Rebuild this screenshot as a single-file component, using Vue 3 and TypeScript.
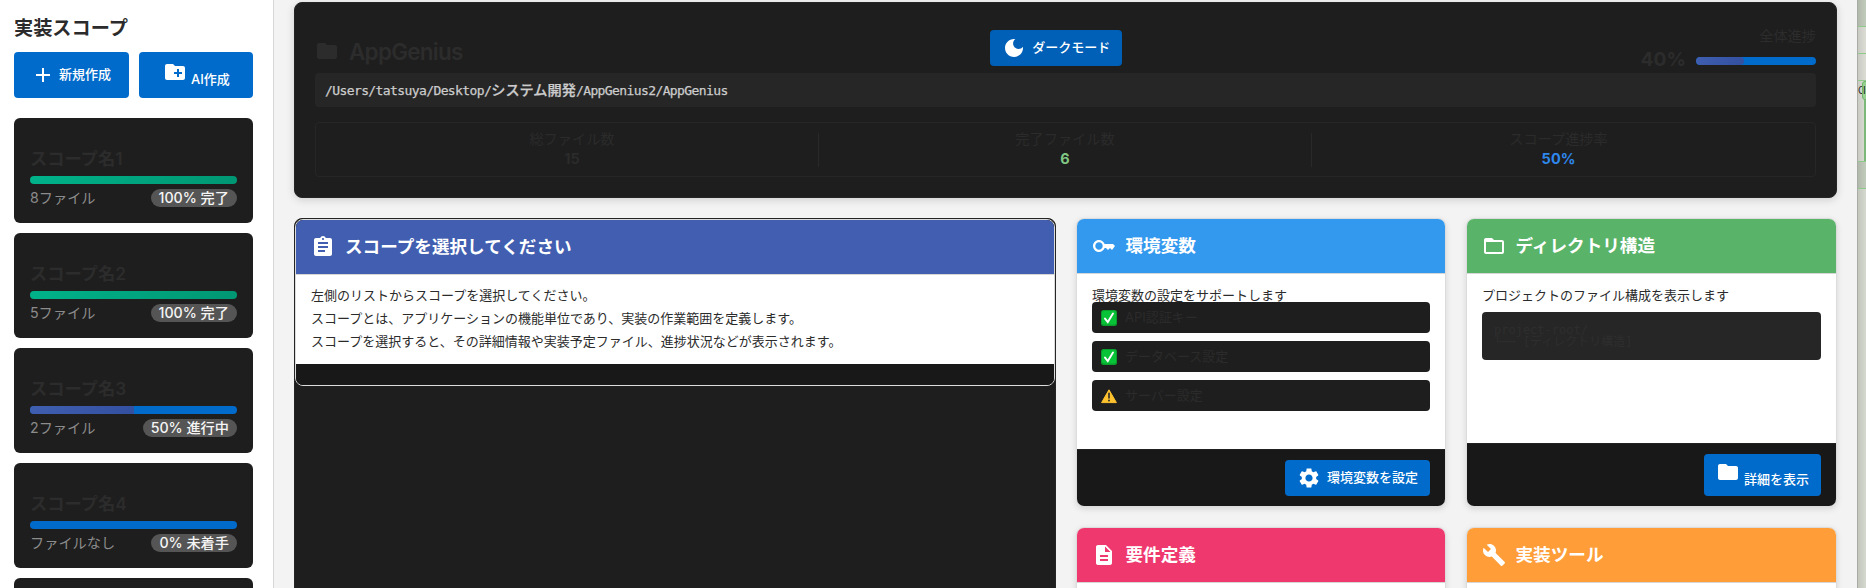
<script setup lang="ts">
interface Scope {
  name: string
  files: string
  status: string
  percent: number
}

const scopes: Scope[] = [
  { name: 'スコープ名1', files: '8ファイル', status: '100% 完了', percent: 100 },
  { name: 'スコープ名2', files: '5ファイル', status: '100% 完了', percent: 100 },
  { name: 'スコープ名3', files: '2ファイル', status: '50% 進行中', percent: 50 },
  { name: 'スコープ名4', files: 'ファイルなし', status: '0% 未着手', percent: 0 },
]

const stats = [
  { label: '総ファイル数', value: '15', tone: 'plain' },
  { label: '完了ファイル数', value: '6', tone: 'green' },
  { label: 'スコープ進捗率', value: '50%', tone: 'blue' },
]

const envItems = [
  { label: 'API認証キー', ok: true },
  { label: 'データベース設定', ok: true },
  { label: 'サーバー設定', ok: false },
]

const icons = {
  add: 'M19 13h-6v6h-2v-6H5v-2h6V5h2v6h6v2z',
  newFolder:
    'M20 6h-8l-2-2H4c-1.11 0-1.99.89-1.99 2L2 18c0 1.11.89 2 2 2h16c1.11 0 2-.89 2-2V8c0-1.11-.89-2-2-2zm-1 8h-3v3h-2v-3h-3v-2h3V9h2v3h3v2z',
  folder: 'M10 4H4c-1.1 0-1.99.9-1.99 2L2 18c0 1.1.9 2 2 2h16c1.1 0 2-.9 2-2V8c0-1.1-.9-2-2-2h-8l-2-2z',
  folderOutline:
    'M20 6h-8l-2-2H4c-1.1 0-1.99.9-1.99 2L2 18c0 1.1.9 2 2 2h16c1.1 0 2-.9 2-2V8c0-1.1-.9-2-2-2zm0 12H4V8h16v10z',
  moon: 'M12 3c-4.97 0-9 4.03-9 9s4.03 9 9 9 9-4.03 9-9c0-.46-.04-.92-.1-1.36-.98 1.37-2.58 2.26-4.4 2.26-2.98 0-5.4-2.42-5.4-5.4 0-1.81.89-3.42 2.26-4.4-.44-.06-.9-.1-1.36-.1z',
  clipboard:
    'M19 3h-4.18C14.4 1.84 13.3 1 12 1c-1.3 0-2.4.84-2.82 2H5c-1.1 0-2 .9-2 2v14c0 1.1.9 2 2 2h14c1.1 0 2-.9 2-2V5c0-1.1-.9-2-2-2zm-7 0c.55 0 1 .45 1 1s-.45 1-1 1-1-.45-1-1 .45-1 1-1zm2 14H7v-2h7v2zm3-4H7v-2h10v2zm0-4H7V7h10v2z',
  key: 'M12.65 10C11.83 7.67 9.61 6 7 6c-3.31 0-6 2.69-6 6s2.69 6 6 6c2.61 0 4.83-1.67 5.65-4l1.35 0 2 2 2-2 2 2 3-4-2-2H12.65zM7 15.7c-2.04 0-3.7-1.66-3.7-3.7S4.96 8.3 7 8.3s3.7 1.66 3.7 3.7-1.66 3.7-3.7 3.7z',
  document:
    'M14 2H6c-1.1 0-1.99.9-1.99 2L4 20c0 1.1.89 2 1.99 2H18c1.1 0 2-.9 2-2V8l-6-6zm2 16H8v-2h8v2zm0-4H8v-2h8v2zm-3-5V3.5L18.5 9H13z',
  wrench:
    'M22.7 19l-9.1-9.1c.9-2.3.4-5-1.5-6.9-2-2-5-2.4-7.4-1.3L9 6 6 9 1.6 4.7C.4 7.1.9 10.1 2.9 12.1c1.9 1.9 4.6 2.4 6.9 1.5l9.1 9.1c.4.4 1 .4 1.4 0l2.3-2.3c.5-.4.5-1.1.1-1.4z',
  gear: 'M19.14 12.94c.04-.3.06-.61.06-.94 0-.32-.02-.64-.07-.94l2.03-1.58c.18-.14.23-.41.12-.61l-1.92-3.32c-.12-.22-.37-.29-.59-.22l-2.39.96c-.5-.38-1.03-.7-1.62-.94l-.36-2.54c-.04-.24-.24-.41-.48-.41h-3.84c-.24 0-.43.17-.47.41l-.36 2.54c-.59.24-1.13.57-1.62.94l-2.39-.96c-.22-.08-.47 0-.59.22L2.74 8.87c-.12.21-.08.47.12.61l2.03 1.58c-.05.3-.09.63-.09.94s.02.64.07.94l-2.03 1.58c-.18.14-.23.41-.12.61l1.92 3.32c.12.22.37.29.59.22l2.39-.96c.5.38 1.03.7 1.62.94l.36 2.54c.05.24.24.41.48.41h3.84c.24 0 .44-.17.47-.41l.36-2.54c.59-.24 1.13-.56 1.62-.94l2.39.96c.22.08.47 0 .59-.22l1.92-3.32c.12-.22.07-.47-.12-.61l-2.01-1.58zM12 15.6c-1.98 0-3.6-1.62-3.6-3.6s1.62-3.6 3.6-3.6 3.6 1.62 3.6 3.6-1.62 3.6-3.6 3.6z',
}
</script>

<template>
  <div class="app">
    <aside class="sidebar">
      <h2 class="side-title">実装スコープ</h2>
      <div class="side-actions">
        <button class="btn new">
          <svg class="icon" viewBox="0 0 24 24"><path :d="icons.add" /></svg><span>新規作成</span>
        </button>
        <button class="btn ai">
          <svg class="icon" viewBox="0 0 24 24"><path :d="icons.newFolder" /></svg><span class="low">AI作成</span>
        </button>
      </div>
      <div v-for="s in scopes" :key="s.name" class="scope">
        <div class="scope-name">{{ s.name }}</div>
        <div class="bar">
          <div class="fill" :class="{ done: s.percent === 100 }" :style="{ width: s.percent + '%' }"></div>
        </div>
        <div class="scope-foot">
          <span class="files">{{ s.files }}</span>
          <span class="pill">{{ s.status }}</span>
        </div>
      </div>
      <div class="scope"></div>
    </aside>

    <main class="main">
      <section class="project">
        <div class="project-top">
          <div class="project-name">
            <svg class="icon" viewBox="0 0 24 24"><path :d="icons.folder" /></svg>
            <span>AppGenius</span>
          </div>
          <button class="btn theme">
            <svg class="icon" viewBox="0 0 24 24"><path :d="icons.moon" /></svg><span>ダークモード</span>
          </button>
          <div class="overall">
            <div class="overall-label">全体進捗</div>
            <div class="overall-row">
              <span class="overall-value">40%</span>
              <div class="bar overall-bar"><div class="fill round" :style="{ width: '40%' }"></div></div>
            </div>
          </div>
        </div>
        <div class="path">/Users/tatsuya/Desktop/<span class="jp">システム開発</span>/AppGenius2/AppGenius</div>
        <div class="stats">
          <div v-for="st in stats" :key="st.label" class="stat">
            <div class="stat-label">{{ st.label }}</div>
            <div class="stat-value" :class="st.tone">{{ st.value }}</div>
          </div>
        </div>
      </section>

      <div class="board">
        <section class="detail">
          <div class="card detail-card">
            <header class="card-head indigo">
              <svg class="icon" viewBox="0 0 24 24"><path :d="icons.clipboard" /></svg>
              <span>スコープを選択してください</span>
            </header>
            <div class="detail-body">
              <p>左側のリストからスコープを選択してください。</p>
              <p>スコープとは、アプリケーションの機能単位であり、実装の作業範囲を定義します。</p>
              <p>スコープを選択すると、その詳細情報や実装予定ファイル、進捗状況などが表示されます。</p>
            </div>
            <footer class="detail-foot"></footer>
          </div>
        </section>

        <section class="tools">
          <div class="card">
            <header class="card-head sky">
              <svg class="icon" viewBox="0 0 24 24"><path :d="icons.key" /></svg><span>環境変数</span>
            </header>
            <div class="card-body">
              <p class="lead">環境変数の設定をサポートします</p>
              <div v-for="e in envItems" :key="e.label" class="env">
                <svg v-if="e.ok" class="mark" viewBox="0 0 16 16">
                  <rect width="16" height="16" rx="2.5" fill="#0a9f2c" />
                  <rect x="1" y="1" width="14" height="13.5" rx="2" fill="#08c238" />
                  <path d="M4 8.6 6.8 12 12 3.6" fill="none" stroke="#fff" stroke-width="1.9" stroke-linecap="round" />
                </svg>
                <svg v-else class="mark" viewBox="0 0 16 16">
                  <path d="M8 1.8 15.4 14.6H.6z" fill="#fec22f" stroke="#fec22f" stroke-width="1" stroke-linejoin="round" />
                  <path d="M8 5.4v4.4" stroke="#33302a" stroke-width="1.7" stroke-linecap="round" />
                  <circle cx="8" cy="12.5" r="1" fill="#33302a" />
                </svg>
                <span>{{ e.label }}</span>
              </div>
            </div>
            <footer class="card-foot">
              <button class="btn">
                <svg class="icon" viewBox="0 0 24 24"><path :d="icons.gear" /></svg><span>環境変数を設定</span>
              </button>
            </footer>
          </div>

          <div class="card">
            <header class="card-head green">
              <svg class="icon" viewBox="0 0 24 24"><path :d="icons.folderOutline" /></svg><span>ディレクトリ構造</span>
            </header>
            <div class="card-body">
              <p class="lead">プロジェクトのファイル構成を表示します</p>
              <pre class="tree">project-root/
└── [ディレクトリ構造]</pre>
            </div>
            <footer class="card-foot">
              <button class="btn show">
                <svg class="icon" viewBox="0 0 24 24"><path :d="icons.folder" /></svg><span class="low">詳細を表示</span>
              </button>
            </footer>
          </div>

          <div class="card">
            <header class="card-head pink">
              <svg class="icon" viewBox="0 0 24 24"><path :d="icons.document" /></svg><span>要件定義</span>
            </header>
          </div>
          <div class="card">
            <header class="card-head orange">
              <svg class="icon" viewBox="0 0 24 24"><path :d="icons.wrench" /></svg><span>実装ツール</span>
            </header>
          </div>
        </section>
      </div>
    </main>

    <div class="edge">
      <div class="row shade"></div>
      <div class="row"></div>
      <div class="row"></div>
      <div class="row tall">
        <div class="chip-line"><span>C</span><span class="chip">I</span></div>
        <div class="stem"></div>
      </div>
      <div class="row shade"></div>
    </div>
  </div>
</template>

<style>
body {
  margin: 0;
  overflow: hidden;
}
</style>

<style scoped>
.app {
  display: flex;
  width: 1866px;
  height: 588px;
  overflow: hidden;
  background: #f3f3f3;
  color: #2b2b2b;
  font-family: Inter, 'Noto Sans CJK JP', sans-serif;
  font-size: 13px;
}
.app * {
  box-sizing: border-box;
}
p,
h2,
pre {
  margin: 0;
}
.icon {
  width: 24px;
  height: 24px;
  flex: none;
  fill: currentColor;
}

.sidebar {
  width: 274px;
  flex: none;
  padding: 14px 20px 0 14px;
  background: #fff;
  border-right: 1px solid #d6d6d6;
}
.side-title {
  height: 38px;
  font-size: 19.2px;
  line-height: 28px;
  font-weight: 600;
}
.side-actions {
  display: grid;
  grid-template-columns: 115px 114px;
  gap: 10px;
  margin-bottom: 20px;
}
.btn {
  display: flex;
  align-items: center;
  height: 36px;
  padding: 0 12px;
  gap: 6px;
  border: 0;
  border-radius: 4px;
  background: #006bcb;
  color: #fff;
  font: 500 13px/20px Inter, 'Noto Sans CJK JP', sans-serif;
  white-space: nowrap;
}
.btn span {
  margin-top: -3px;
}
.new,
.ai {
  height: 46px;
  padding: 0 0 0 17px;
  gap: 4px;
}
.ai {
  padding: 0 0 7px 24px;
}
.btn .low {
  margin-top: 14px;
}
.ai .low {
  margin-top: 15px;
}
.scope {
  height: 105px;
  margin-bottom: 10px;
  padding: 28px 16px 0;
  border-radius: 6px;
  background: #1e1e1e;
}
.scope-name {
  height: 30px;
  font-size: 17.3px;
  line-height: 26px;
  font-weight: 600;
  color: #2c2c2c;
}
.bar {
  height: 8px;
  border-radius: 4px;
  background: #006bcb;
  overflow: hidden;
}
.fill {
  height: 100%;
  background: linear-gradient(135deg, #415fb0, #324fa0);
}
.fill.done {
  background: linear-gradient(135deg, #00b38a, #009673);
}
.fill.round {
  border-radius: 4px;
}
.scope-foot {
  display: flex;
  justify-content: space-between;
  margin-top: 5px;
  font-size: 14.2px;
  line-height: 18px;
}
.files {
  color: #8c8c8c;
}
.pill {
  height: 18px;
  padding: 0 8px;
  border-radius: 9px;
  background: #555;
  color: #f5f5f5;
  font-weight: 500;
  line-height: 17px;
}

.main {
  width: 1583px;
  flex: none;
  padding: 2px 20px 0;
}
.project {
  height: 196px;
  margin-bottom: 20px;
  padding: 27px 20px 0;
  border: 1px solid #252525;
  border-radius: 8px;
  background: #1e1e1e;
  box-shadow: 0 2px 8px rgba(0, 0, 0, 0.15);
}
.project-top {
  display: flex;
  justify-content: space-between;
  height: 43px;
}
.project-name {
  display: flex;
  align-items: center;
  gap: 10px;
  width: 157px;
  height: 24px;
  margin-top: 9px;
  font-size: 22.5px;
  letter-spacing: -0.75px;
  font-weight: 600;
  color: #2c2c2c;
}
.theme {
  background: #0060b7;
}
.overall {
  color: #2c2c2c;
}
.overall-label {
  height: 20px;
  font-size: 14.2px;
  line-height: 11px;
  text-align: right;
}
.overall-row {
  display: flex;
  align-items: center;
  gap: 10px;
}
.overall-value {
  font-size: 19.2px;
  line-height: 18px;
  font-weight: 700;
}
.overall-bar {
  width: 120px;
  margin-top: 4px;
}
.path {
  height: 34px;
  padding: 0 10px;
  border-radius: 4px;
  background: #262626;
  color: #ccc;
  font: 13px/32px 'DejaVu Sans Mono', 'Noto Sans CJK JP', monospace;
  letter-spacing: -0.6px;
  -webkit-text-stroke: 0.25px #ccc;
}
.jp {
  font-family: 'Noto Sans CJK JP', sans-serif;
  font-size: 14.2px;
  font-weight: 500;
  letter-spacing: 0;
}
.stats {
  display: grid;
  grid-template-columns: repeat(3, 1fr);
  height: 55px;
  margin-top: 15px;
  padding: 10px;
  border: 1px solid #262626;
  border-radius: 4px;
}
.stat {
  text-align: center;
}
.stat:not(:last-child) {
  border-right: 1px solid #292929;
}
.stat-label {
  height: 18px;
  font-size: 14.2px;
  line-height: 12px;
}
.stat-value {
  font-size: 14.5px;
  line-height: 16px;
  font-weight: 700;
}
.green.stat-value {
  color: #81c784;
}
.blue.stat-value {
  color: #2f88ee;
}

.board {
  display: flex;
  gap: 20px;
}
.detail {
  width: 762px;
  height: 400px;
  flex: none;
  border: 1px solid #252525;
  border-radius: 8px;
  background: #1e1e1e;
}
.card {
  display: flex;
  flex-direction: column;
  border: 1px solid #dcdcdc;
  border-radius: 8px;
  background: #fff;
  overflow: hidden;
  box-shadow: 0 2px 6px rgba(0, 0, 0, 0.12);
}
.detail-card {
  height: 167px;
  box-shadow: none;
  background: #181818;
}
.card-head {
  display: flex;
  align-items: center;
  gap: 10px;
  height: 55px;
  flex: none;
  padding: 0 15px;
  border-bottom: 1px solid #d6d6d6;
  color: #fff;
  font-size: 17.6px;
  line-height: 24px;
  font-weight: 700;
}
.tools .card-head {
  padding: 0 14.5px;
}
.card-head span {
  margin-top: -1px;
}
.indigo {
  background: #415eb0;
}
.sky {
  background: #3399ee;
}
.card-head.green {
  background: #59b369;
}
.pink {
  background: #ee386e;
}
.orange {
  background: #ff9d38;
}
.detail-body {
  height: 89px;
  padding: 9px 15px 0;
  background: #fff;
  line-height: 23px;
}
.detail-foot {
  flex: 1;
  background: #181818;
}
.tools {
  flex: 1;
  display: grid;
  grid-template-columns: 370px 371px;
  grid-template-rows: 289px 289px;
  gap: 20px;
}
.card-body {
  flex: 1;
  padding: 15px 15px 0;
}
.lead {
  height: 13px;
  line-height: 12px;
}
.env {
  display: flex;
  align-items: center;
  gap: 8px;
  height: 31px;
  margin-bottom: 8px;
  padding: 0 9px;
  border-radius: 4px;
  background: #1e1e1e;
}
.env span {
  margin-top: -2px;
}
.mark {
  width: 16px;
  height: 16px;
}
.tree {
  height: 48px;
  margin-top: 10px;
  padding: 12px;
  border-radius: 4px;
  background: #262626;
  color: #2e2e2e;
  font: 12px/12px 'DejaVu Sans Mono', 'Noto Sans CJK JP', monospace;
}
.card-foot {
  display: flex;
  justify-content: flex-end;
  padding: 10px 15px;
  border-top: 1px solid #222;
  background: #181818;
}
.show {
  height: 42px;
  gap: 4px;
  padding-bottom: 6px;
}

.edge {
  flex: 1;
  border-left: 1px solid #a8aca4;
  background: linear-gradient(90deg, #c2c6bc, #d6d9d0);
  overflow: hidden;
}
.row {
  height: 27px;
  border-bottom: 1px solid #8fca8a;
  background: linear-gradient(90deg, #c8cac3, #dcded6);
}
.row.shade {
  background: linear-gradient(90deg, #b0b8ab, #c2ccbc);
}
.row.tall {
  display: flex;
  flex-direction: column;
  height: 81px;
}
.chip-line {
  display: flex;
  height: 19px;
  font-size: 10px;
  line-height: 19px;
  color: #222;
}
.chip-line span:first-child {
  width: 4px;
}
.chip {
  width: 10px;
  flex: none;
  border: 1px solid #6fb36d;
  border-radius: 3px;
  background: #97d191;
  line-height: 17px;
}
.stem {
  flex: 1;
  margin-left: 6px;
  background: #7cb87a;
}
</style>
